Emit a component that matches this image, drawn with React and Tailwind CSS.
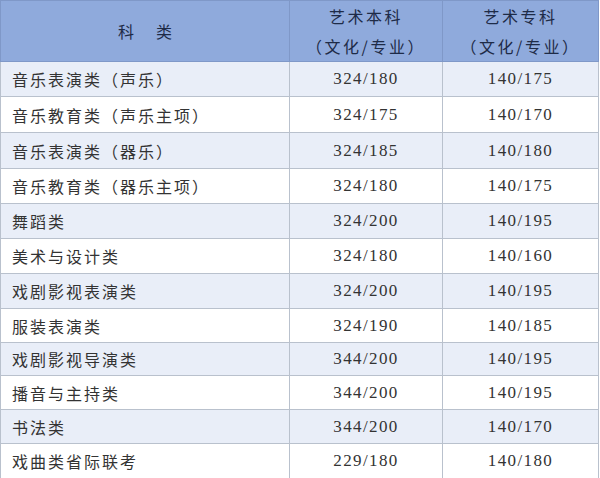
import React from 'react';

const rows = [
  { name: '音乐表演类（声乐）', a: '324/180', b: '140/175', h: 'h-[35px]' },
  { name: '音乐教育类（声乐主项）', a: '324/175', b: '140/170', h: 'h-[36px]' },
  { name: '音乐表演类（器乐）', a: '324/185', b: '140/180', h: 'h-[36px]' },
  { name: '音乐教育类（器乐主项）', a: '324/180', b: '140/175', h: 'h-[35px]' },
  { name: '舞蹈类', a: '324/200', b: '140/195', h: 'h-[35px]' },
  { name: '美术与设计类', a: '324/180', b: '140/160', h: 'h-[35px]' },
  { name: '戏剧影视表演类', a: '324/200', b: '140/195', h: 'h-[35px]' },
  { name: '服装表演类', a: '324/190', b: '140/185', h: 'h-[34px]' },
  { name: '戏剧影视导演类', a: '344/200', b: '140/195', h: 'h-[33px]' },
  { name: '播音与主持类', a: '344/200', b: '140/195', h: 'h-[34px]' },
  { name: '书法类', a: '344/200', b: '140/170', h: 'h-[34px]' },
  { name: '戏曲类省际联考', a: '229/180', b: '140/180', h: 'h-[35px]' },
];

const cjk = "font-['Noto_Sans_CJK_SC',sans-serif]";
const num = "font-['Liberation_Serif',serif]";

export default function App() {
  return (
    <div className="w-[600px] h-[478px] bg-white overflow-hidden">
      <table className="w-[598px] border-collapse table-fixed">
        <colgroup>
          <col className="w-[289px]" />
          <col className="w-[153px]" />
          <col className="w-[156px]" />
        </colgroup>
        <thead>
          <tr className="h-[60px] bg-[#8faadc] text-[#1e2b47]">
            <th className={`border border-[#7f98c8] font-normal text-[16px] ${cjk}`}>
              <span>科</span>
              <span className="ml-[22px]">类</span>
            </th>
            <th className={`border border-[#7f98c8] font-normal text-[16px] leading-[30px] tracking-[2.5px] ${cjk}`}>
              艺术本科<br />（文化/专业）
            </th>
            <th className={`border border-[#7f98c8] font-normal text-[16px] leading-[30px] tracking-[2.5px] ${cjk}`}>
              艺术专科<br />（文化/专业）
            </th>
          </tr>
        </thead>
        <tbody>
          {rows.map((r, i) => (
            <tr key={r.name} className={`${r.h} ${i % 2 === 0 ? 'bg-[#e9eef8]' : 'bg-white'}`}>
              <td className={`border border-[#b9c1cd] pl-[11px] text-[16px] tracking-[2px] text-[#333] ${cjk}`}>
                {r.name}
              </td>
              <td className={`border border-[#b9c1cd] text-center text-[17px] tracking-[1.4px] text-[#333] ${num}`}>
                {r.a}
              </td>
              <td className={`border border-[#b9c1cd] text-center text-[17px] tracking-[1.4px] text-[#333] ${num}`}>
                {r.b}
              </td>
            </tr>
          ))}
        </tbody>
      </table>
    </div>
  );
}
